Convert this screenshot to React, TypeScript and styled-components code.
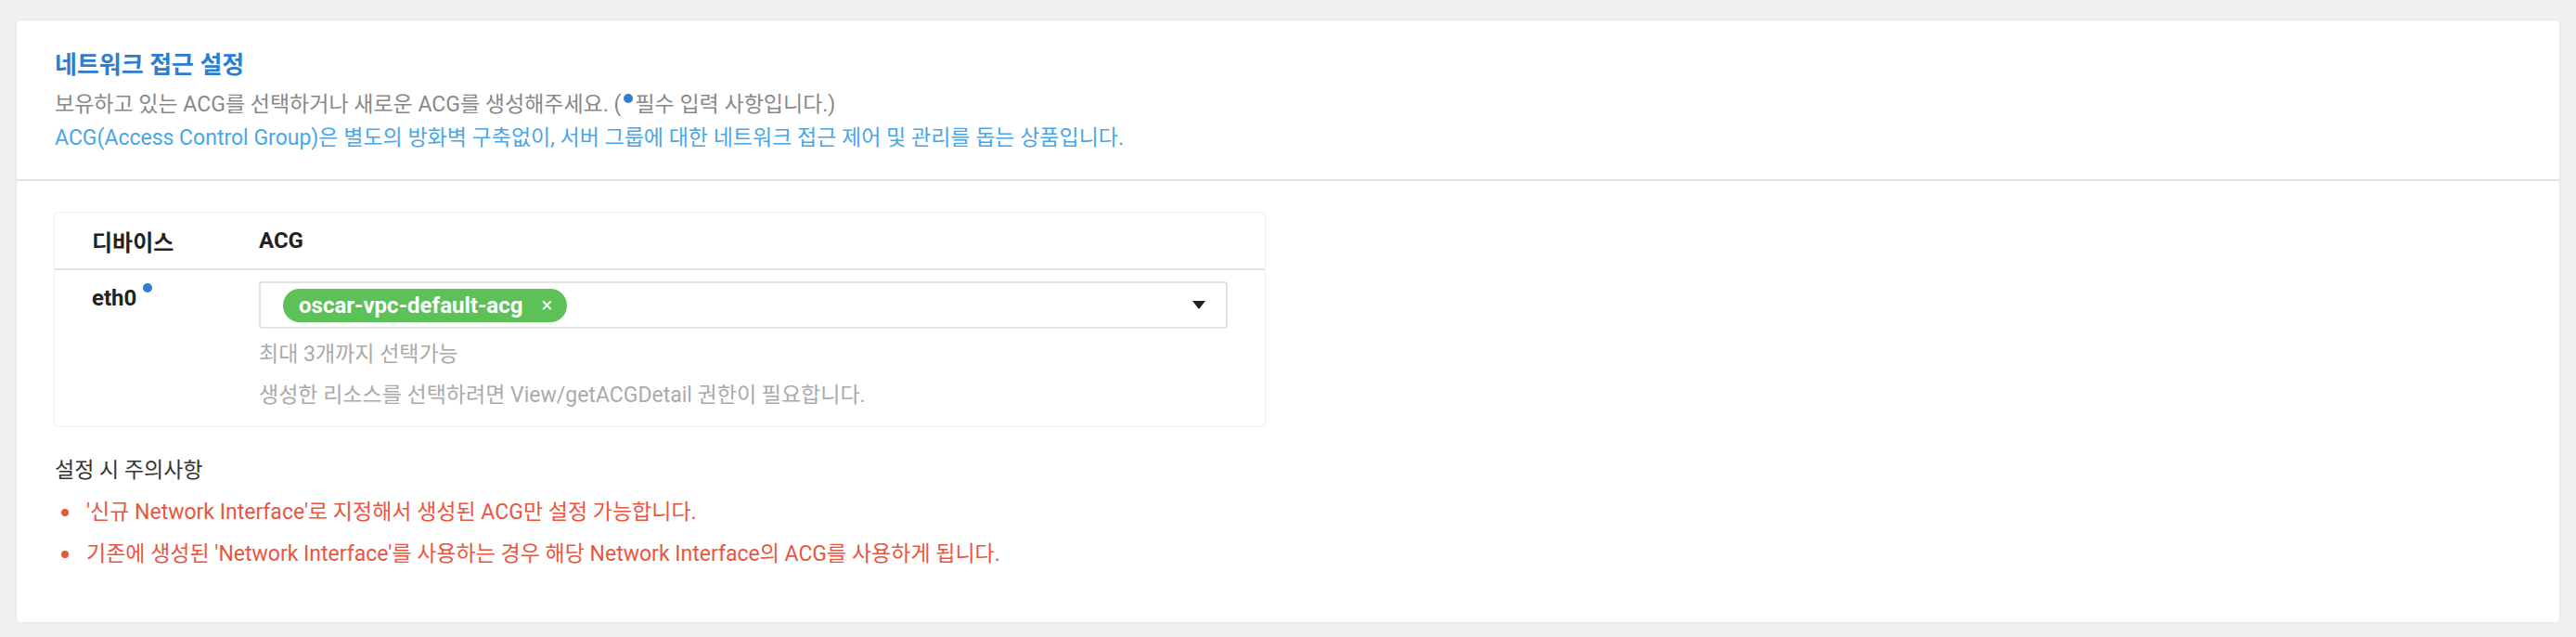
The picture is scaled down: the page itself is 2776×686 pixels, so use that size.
import React from "react";
import styled, { createGlobalStyle } from "styled-components";

const GlobalStyle = createGlobalStyle`
  html, body {
    margin: 0;
    background: #f0f0f0;
  }
  body {
    font-family: Roboto, "Noto Sans CJK KR", sans-serif;
    padding: 22px 18px 18px;
  }
`;

const Card = styled.section`
  background: #fff;
  border-radius: 4px;
  box-shadow: 0 0 0 1px #e6e6e6;
`;

const Header = styled.div`
  padding: 28px 40px 26px 41px;
  border-bottom: 2px solid #e4e4e4;
`;

const Title = styled.h2`
  margin: 0 0 5px;
  font-size: 26px;
  line-height: 40px;
  font-weight: 700;
  color: #2f7dd1;
`;

const Desc = styled.p<{ tone?: "gray" | "blue" }>`
  margin: 0;
  font-size: 23px;
  line-height: 36px;
  color: ${({ tone }) => (tone === "blue" ? "#4aa6e6" : "#888")};
`;

const RequiredDot = styled.span<{ raise?: boolean }>`
  display: inline-block;
  width: 10px;
  height: 10px;
  border-radius: 50%;
  background: #2f7dd1;
  margin: 0 2px 0 ${({ raise }) => (raise ? "7px" : "3px")};
  vertical-align: ${({ raise }) => (raise ? "14px" : "9px")};
`;

const Body = styled.div`
  padding: 33px 40px 55px;
`;

const Table = styled.div`
  width: 1306px;
  border: 1px solid #ececec;
  border-radius: 4px;
  box-sizing: border-box;
`;

const Row = styled.div<{ head?: boolean }>`
  display: grid;
  grid-template-columns: 220px 1fr;
  ${({ head }) =>
    head
      ? `height: 60px; align-items: center; border-bottom: 2px solid #e4e4e4;`
      : `padding: 12px 0 15px;`}
`;

const HeadCell = styled.div<{ first?: boolean }>`
  padding-left: ${({ first }) => (first ? "40px" : "0")};
  font-size: 24px;
  font-weight: 700;
  color: #222;
`;

const DeviceCell = styled.div`
  padding-left: 40px;
  font-size: 24px;
  line-height: 36px;
  font-weight: 700;
  color: #222;
`;

const FieldCell = styled.div`
  padding-right: 40px;
`;

const Select = styled.div`
  height: 51px;
  box-sizing: border-box;
  border: 2px solid #e2e2e2;
  border-radius: 4px;
  display: flex;
  align-items: center;
  padding: 0 22px 0 24px;
`;

const Tag = styled.span`
  display: inline-flex;
  align-items: center;
  height: 36px;
  padding: 0 16px 0 17px;
  border-radius: 18px;
  background: #5cc257;
  color: #fff;
  font-size: 24px;
  font-weight: 700;
`;

const TagClose = styled.span`
  margin-left: 20px;
  font-size: 22px;
  font-weight: 400;
`;

const Caret = styled.svg`
  margin-left: auto;
`;

const Help = styled.div<{ gap: number }>`
  margin-top: ${({ gap }) => gap}px;
  font-size: 23px;
  line-height: 36px;
  color: #aaa;
`;

const NoticeTitle = styled.div`
  margin-top: 29px;
  padding-left: 1px;
  font-size: 23px;
  line-height: 36px;
  color: #333;
`;

const NoticeList = styled.ul`
  margin: 0;
  padding: 0;
  list-style: none;
`;

const NoticeItem = styled.li`
  display: flex;
  align-items: center;
  margin-top: 9px;
  font-size: 23px;
  line-height: 36px;
  color: #e8563f;
  &::before {
    content: "";
    width: 8px;
    height: 8px;
    border-radius: 50%;
    background: #e8563f;
    margin: 0 19px 0 8px;
    flex: none;
  }
`;

export default function App() {
  return (
    <>
      <GlobalStyle />
      <Card>
        <Header>
          <Title>네트워크 접근 설정</Title>
          <Desc>
            보유하고 있는 ACG를 선택하거나 새로운 ACG를 생성해주세요. (
            <RequiredDot />
            필수 입력 사항입니다.)
          </Desc>
          <Desc tone="blue">
            ACG(Access Control Group)은 별도의 방화벽 구축없이, 서버 그룹에 대한 네트워크 접근 제어 및 관리를 돕는
            상품입니다.
          </Desc>
        </Header>
        <Body>
          <Table>
            <Row head>
              <HeadCell first>디바이스</HeadCell>
              <HeadCell>ACG</HeadCell>
            </Row>
            <Row>
              <DeviceCell>
                eth0
                <RequiredDot raise />
              </DeviceCell>
              <FieldCell>
                <Select>
                  <Tag>
                    oscar-vpc-default-acg
                    <TagClose>×</TagClose>
                  </Tag>
                  <Caret width="14" height="9" viewBox="0 0 14 9">
                    <polygon points="0,0 14,0 7,9" fill="#222" />
                  </Caret>
                </Select>
                <Help gap={10}>최대 3개까지 선택가능</Help>
                <Help gap={8}>생성한 리소스를 선택하려면 View/getACGDetail 권한이 필요합니다.</Help>
              </FieldCell>
            </Row>
          </Table>
          <NoticeTitle>설정 시 주의사항</NoticeTitle>
          <NoticeList>
            <NoticeItem>'신규 Network Interface'로 지정해서 생성된 ACG만 설정 가능합니다.</NoticeItem>
            <NoticeItem>
              기존에 생성된 'Network Interface'를 사용하는 경우 해당 Network Interface의 ACG를 사용하게 됩니다.
            </NoticeItem>
          </NoticeList>
        </Body>
      </Card>
    </>
  );
}
